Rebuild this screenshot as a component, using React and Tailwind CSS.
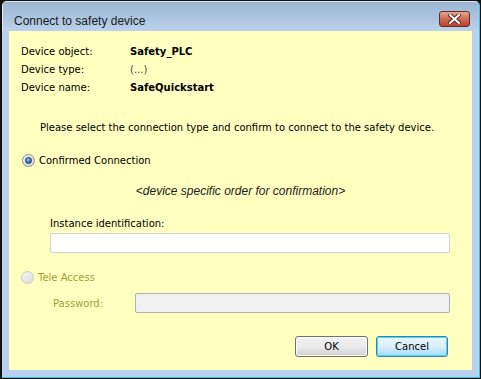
import React from 'react';

const font = "font-['DejaVu_Sans',Tahoma,sans-serif]";

const Radio = ({ checked, disabled }) => {
  if (disabled) {
    return (
      <span className="w-[13px] h-[13px] rounded-full border border-[#c9c9c9] bg-gradient-to-br from-[#f4f4f4] to-[#dcdcdc] shrink-0" />
    );
  }
  return (
    <span className="w-[13px] h-[13px] rounded-full border border-[#8e8f8f] bg-gradient-to-br from-[#f0f0f0] to-[#d4d4d4] flex items-center justify-center shrink-0">
      <span className="w-[7px] h-[7px] rounded-full border border-[#1c3a66] bg-[radial-gradient(circle_at_40%_35%,#9fd8ff_0%,#2f86d0_45%,#124c8c_100%)]" />
    </span>
  );
};

const InfoRow = ({ label, value, muted }) => (
  <div className="h-[18px] flex items-center">
    <span className="w-[109px] text-black">{label}</span>
    <span className={muted ? 'text-[#4a4a4a]' : 'font-bold text-black'}>{value}</span>
  </div>
);

export default function App() {
  return (
    <div className={`w-[481px] h-[379px] bg-[#111] pl-[2px] pt-px pr-px pb-px ${font} text-[10px]`}>
      <div className="h-full flex flex-col border-r border-b border-[#3ac3e6] bg-[#b9d1ea] rounded-t-[5px] overflow-hidden">
        {/* title bar */}
        <div className="h-[30px] shrink-0 flex items-start justify-between pl-[11px] pr-[9px] bg-gradient-to-b from-[#9cb5d2] to-[#bad2eb] border-t border-l border-[#dbe6f2]">
          <span className="mt-[12px] leading-[14px] text-[12px] text-[#1b1b1b] font-['Liberation_Sans',Arial,sans-serif]">Connect to safety device</span>
          <span className="mt-[9px] w-[31px] h-[16px] rounded-[3px] border border-[#6b2a22] bg-gradient-to-b from-[#e2a898] via-[#cc6a55] to-[#b9412c] flex items-center justify-center">
            <svg width="13" height="10" viewBox="0 0 13 10">
              <path d="M2 1 L11 9 M11 1 L2 9" stroke="#5a2a20" strokeWidth="4" strokeLinecap="square" />
              <path d="M2 1 L11 9 M11 1 L2 9" stroke="#ffffff" strokeWidth="2" strokeLinecap="square" />
            </svg>
          </span>
        </div>

        {/* content */}
        <div className="flex-1 ml-[7px] mr-[7px] mb-[7px] bg-[#ffffc0] flex flex-col">
          <div className="pl-[12px] pt-[11px]">
            <InfoRow label="Device object:" value="Safety_PLC" />
            <InfoRow label="Device type:" value="(...)" muted />
            <InfoRow label="Device name:" value="SafeQuickstart" />
          </div>

          <div className="h-[18px] mt-[22px] pl-[31px] flex items-center text-black">
            Please select the connection type and confirm to connect to the safety device.
          </div>

          <div className="h-[18px] mt-[15px] pl-[13px] flex items-center gap-[4px] text-black">
            <Radio checked />
            <span>Confirmed Connection</span>
          </div>

          <div className="h-[18px] mt-[13px] flex items-center justify-center italic text-[12px] text-[#1e1e1e] font-['Liberation_Sans',Arial,sans-serif]">
            &lt;device specific order for confirmation&gt;
          </div>

          <div className="h-[18px] mt-[14px] pl-[41px] flex items-center text-black">
            Instance identification:
          </div>
          <div className="mt-px pl-[41px] pr-[22px]">
            <div className="h-[20px] bg-white border border-[#cfd4d8] rounded-[2px]" />
          </div>

          <div className="h-[18px] mt-[15px] pl-[12px] flex items-center gap-[4px] text-[#a19f34]">
            <Radio disabled />
            <span>Tele Access</span>
          </div>

          <div className="mt-[7px] pl-[44px] pr-[22px] flex items-center text-[#a19f34]">
            <span className="w-[82px]">Password:</span>
            <div className="flex-1 h-[20px] bg-[#f0f0f0] border border-[#adb2b5] rounded-[2px]" />
          </div>

          <div className="mt-[23px] pr-[24px] flex justify-end gap-[8px] text-black">
            <button className="w-[73px] h-[21px] rounded-[3px] border border-[#707070] bg-gradient-to-b from-[#f2f2f2] via-[#ebebeb] to-[#d0d0d0] shadow-[inset_0_0_0_1px_#fbfbfb]">
              OK
            </button>
            <button className="w-[72px] h-[21px] rounded-[3px] border border-[#3c7fb1] bg-gradient-to-b from-[#eaf6fd] via-[#d9f0fc] to-[#a7d9f5] shadow-[inset_0_0_0_1px_#48d8fb]">
              Cancel
            </button>
          </div>
        </div>
      </div>
    </div>
  );
}
